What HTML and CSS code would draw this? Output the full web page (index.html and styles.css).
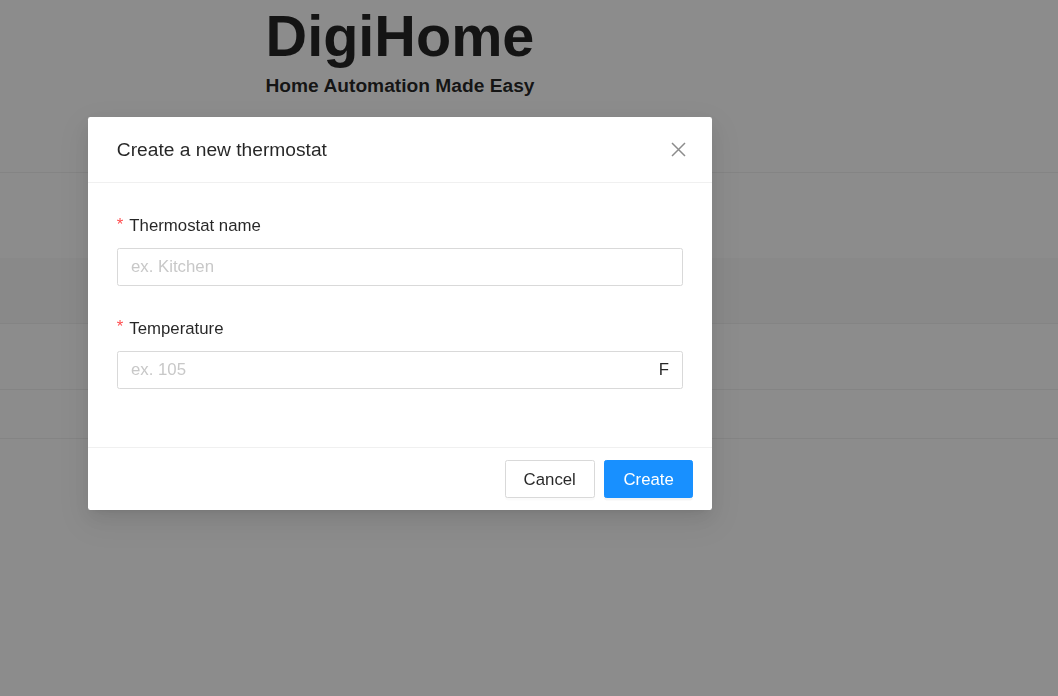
FILE: index.html
```html
<!DOCTYPE html>
<html lang="en">
<head>
<meta charset="utf-8">
<title>DigiHome</title>
<link rel="stylesheet" href="styles.css">
</head>
<body>
<div class="page">
  <header class="hero">
    <h1 class="hero-title">DigiHome</h1>
    <p class="hero-sub">Home Automation Made Easy</p>
  </header>
  <div class="spacer"></div>
  <div class="table">
    <div class="thead"></div>
    <div class="trow tall"></div>
    <div class="trow short"></div>
  </div>
</div>

<div class="mask">
  <div class="modal">
    <div class="modal-header">
      <div class="modal-title">Create a new thermostat</div>
      <button class="modal-close" type="button" aria-label="Close">
        <svg width="15" height="15" viewBox="0 0 15 15" aria-hidden="true">
          <path d="M1 1 L14 14 M14 1 L1 14" stroke="rgba(0,0,0,0.45)" stroke-width="1.5" fill="none"/>
        </svg>
      </button>
    </div>
    <div class="modal-body">
      <div class="form-item">
        <label class="form-label"><span class="req">*</span>Thermostat name</label>
        <div class="input-wrap">
          <input class="input" type="text" placeholder="ex. Kitchen">
        </div>
      </div>
      <div class="form-item">
        <label class="form-label"><span class="req">*</span>Temperature</label>
        <div class="input-wrap">
          <input class="input" type="text" placeholder="ex. 105">
          <span class="suffix">F</span>
        </div>
      </div>
    </div>
    <div class="modal-footer">
      <button class="btn" type="button">Cancel</button>
      <button class="btn btn-primary" type="button">Create</button>
    </div>
  </div>
</div>
</body>
</html>
```

FILE: styles.css
```css
* { box-sizing: border-box; }

html, body {
  margin: 0;
  padding: 0;
  background: #ffffff;
  font-family: "Liberation Sans", Arial, Helvetica, sans-serif;
  color: rgba(0, 0, 0, 0.85);
}

.page {
  width: 100%;
}

.hero {
  width: 100%;
  height: 173px;
  padding-top: 1px;
  border-bottom: 1.2px solid #f0f0f0;
}

.hero-title,
.hero-sub {
  width: 800px;
  text-align: center;
  margin: 0;
}

.hero-title {
  font-size: 57.6px;
  font-weight: 700;
  line-height: 70px;
  color: rgba(0, 0, 0, 0.85);
}

.hero-sub {
  font-size: 19.2px;
  font-weight: 700;
  line-height: 30px;
  color: rgba(0, 0, 0, 0.85);
}

.spacer {
  height: 85px;
}

.thead {
  height: 66px;
  background: #fafafa;
  border-bottom: 1.2px solid #f0f0f0;
}

.trow {
  border-bottom: 1.2px solid #f0f0f0;
}

.trow.tall { height: 66px; }
.trow.short { height: 49px; }

.mask {
  position: fixed;
  inset: 0;
  background: rgba(0, 0, 0, 0.45);
  padding: 117px 0 0 88px;
}

.modal {
  width: 624px;
  background: #ffffff;
  border-radius: 2.4px;
  box-shadow: 0 3.6px 7.2px -4.8px rgba(0, 0, 0, 0.12),
              0 7.2px 19.2px 0 rgba(0, 0, 0, 0.08),
              0 10.8px 33.6px 9.6px rgba(0, 0, 0, 0.05);
}

.modal-header {
  display: flex;
  align-items: center;
  justify-content: space-between;
  height: 66px;
  padding: 0 0 0 28.8px;
  border-bottom: 1.2px solid #f0f0f0;
}

.modal-title {
  font-size: 19.2px;
  line-height: 26.4px;
  color: rgba(0, 0, 0, 0.85);
  padding-top: 1px;
}

.modal-close {
  width: 67px;
  height: 65px;
  border: 0;
  background: transparent;
  padding: 0;
  display: flex;
  align-items: center;
  justify-content: center;
}

.modal-close svg {
  display: block;
  margin-top: -1px;
}

.modal-body {
  padding: 29.8px 28.8px 0;
  height: 264px;
}

.form-item {
  margin-bottom: 29.8px;
}

.form-label {
  display: flex;
  align-items: center;
  height: 26.4px;
  margin-bottom: 8.6px;
  font-size: 16.8px;
  color: rgba(0, 0, 0, 0.85);
}

.req {
  color: #ff4d4f;
  font-size: 16.8px;
  margin-right: 6px;
  line-height: 1;
  position: relative;
  top: -1px;
}

.input-wrap {
  display: flex;
  align-items: center;
  height: 38px;
  border: 1.2px solid #d9d9d9;
  border-radius: 2.4px;
  padding: 1px 13.2px 0;
  background: #ffffff;
}

.input {
  flex: 1;
  min-width: 0;
  border: 0;
  outline: none;
  padding: 0;
  font-family: "Liberation Sans", Arial, Helvetica, sans-serif;
  font-size: 16.8px;
  color: rgba(0, 0, 0, 0.85);
  background: transparent;
}

.input::placeholder {
  color: #c8c8c8;
  opacity: 1;
}

.suffix {
  font-size: 16.8px;
  color: rgba(0, 0, 0, 0.85);
  margin-left: 4.8px;
}

.modal-footer {
  display: flex;
  justify-content: flex-end;
  gap: 9.6px;
  padding: 12px 19.2px;
  border-top: 1.2px solid #f0f0f0;
}

.btn {
  height: 38.4px;
  padding: 1px 18px 0;
  font-family: "Liberation Sans", Arial, Helvetica, sans-serif;
  font-size: 16.8px;
  color: rgba(0, 0, 0, 0.85);
  background: #ffffff;
  border: 1.2px solid #d9d9d9;
  border-radius: 2.4px;
  box-shadow: 0 2.4px 0 rgba(0, 0, 0, 0.015);
}

.btn-primary {
  color: #ffffff;
  background: #1890ff;
  border-color: #1890ff;
  box-shadow: 0 2.4px 0 rgba(0, 0, 0, 0.045);
}
```
